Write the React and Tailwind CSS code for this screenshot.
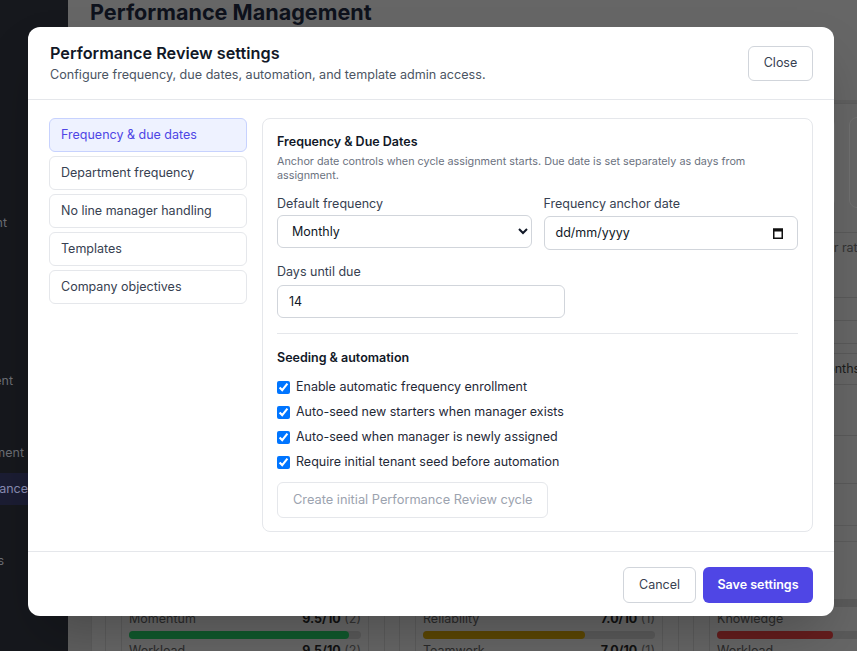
import React from "react";

function SideItem({ label, pr, mt, active }) {
  return (
    <div
      className={
        "h-[32px] flex items-center justify-end overflow-hidden whitespace-nowrap " +
        (active ? "bg-[#1b1d33] text-[#8a8db3] " : "text-[#6b6e75] ")
      }
      style={{ paddingRight: pr, marginTop: mt }}
    >
      <span className="shrink-0">{label}</span>
    </div>
  );
}

function Sidebar() {
  return (
    <aside className="w-[68px] shrink-0 bg-[#16181d] flex flex-col text-[12.5px]">
      <SideItem label="Recruitment" pr={61} mt={207} />
      <SideItem label="Development" pr={55} mt={126} />
      <SideItem label="Engagement" pr={44} mt={40} />
      <SideItem label="Performance" pr={40} mt={4} active />
      <SideItem label="Reports" pr={64} mt={40} />
    </aside>
  );
}

function Metric({ label, value, count, pct, color, first }) {
  return (
    <div className={first ? "" : "mt-[2px]"}>
      <div className="flex justify-between leading-[20px] text-[12.5px]">
        <span className="text-[#2a2a2a]">{label}</span>
        <span>
          <span className="font-bold text-[#111]">{value}</span>{" "}
          <span className="text-[#333]">({count})</span>
        </span>
      </div>
      <div className="mt-[2px] h-[8px] rounded-full bg-[#5a5a5a]">
        <div className={"h-[8px] rounded-full " + color} style={{ width: pct + "%" }} />
      </div>
    </div>
  );
}

function Column({ title, metrics }) {
  return (
    <div className="w-[280px] shrink-0 border border-[#5c5c5c] rounded-lg p-[15px]">
      <div className="border border-[#5c5c5c] rounded-md p-[7px]">
        <div className="text-[12.5px] leading-[20px] font-semibold text-[#111] mb-[8px]">{title}</div>
        {metrics.map((m, i) => (
          <Metric key={i} {...m} first={i === 0} />
        ))}
      </div>
    </div>
  );
}

function Main() {
  return (
    <main className="flex-1 bg-[#5f5f5f] flex flex-col overflow-hidden">
      <div className="bg-[#666666] pl-[22px] h-[100px] shrink-0">
        <h1 className="text-[21.6px] leading-[24px] font-bold text-[#0e121c] whitespace-nowrap">
          Performance Management
        </h1>
      </div>
      <section className="ml-[23px] mt-[3px] w-[900px] shrink-0 bg-[#666666] border border-[#5c5c5c] rounded-lg pt-[13px] px-[13px] pb-[40px]">
        <div className="flex gap-[14px]">
          {[0, 1, 2, 3].map((i) => (
            <div key={i} className="w-[234px] h-[91px] shrink-0 rounded-lg border border-[#707070]" />
          ))}
        </div>
        <div className="mt-[24px] border-t border-[#5a5a5a] text-[12.5px]">
          <div className="h-[65px] border-b border-[#5a5a5a] grid grid-cols-[681px_1fr] pt-[5px]">
            <div />
            <div className="leading-[20px] text-[#333] whitespace-nowrap">Manager rating</div>
          </div>
          <div className="h-[23px] border-b border-[#5a5a5a]" />
          <div className="h-[23px] border-b border-[#5a5a5a]" />
          <div className="h-[92px] border-b border-[#5a5a5a] grid grid-cols-[687px_1fr]">
            <div />
            <div className="mt-[9px] h-[32px] border border-[#5a5a5a] rounded-md flex items-center pl-[12px] text-[#1a1a1a] whitespace-nowrap">
              6 months
            </div>
          </div>
          <div className="h-[48px] border-b border-[#5a5a5a]" />
        </div>
        <div className="mt-[41px] flex gap-[14px]">
          <Column
            title="Engineering"
            metrics={[
              { label: "Quality", value: "8.0/10", count: 2, pct: 80, color: "bg-[#105a2d]" },
              { label: "Momentum", value: "9.5/10", count: 2, pct: 95, color: "bg-[#105a2d]" },
              { label: "Workload", value: "9.5/10", count: 2, pct: 95, color: "bg-[#105a2d]" },
            ]}
          />
          <Column
            title="Operations"
            metrics={[
              { label: "Quality", value: "7.0/10", count: 1, pct: 70, color: "bg-[#5c4703]" },
              { label: "Reliability", value: "7.0/10", count: 1, pct: 70, color: "bg-[#5c4703]" },
              { label: "Teamwork", value: "7.0/10", count: 1, pct: 70, color: "bg-[#5c4703]" },
            ]}
          />
          <Column
            title="Sales"
            metrics={[
              { label: "Quality", value: "5.0/10", count: 1, pct: 50, color: "bg-[#651d1d]" },
              { label: "Knowledge", value: "5.0/10", count: 1, pct: 50, color: "bg-[#651d1d]" },
              { label: "Workload", value: "5.0/10", count: 1, pct: 50, color: "bg-[#651d1d]" },
            ]}
          />
        </div>
      </section>
    </main>
  );
}

const navItems = [
  "Frequency & due dates",
  "Department frequency",
  "No line manager handling",
  "Templates",
  "Company objectives",
];

const checks = [
  "Enable automatic frequency enrollment",
  "Auto-seed new starters when manager exists",
  "Auto-seed when manager is newly assigned",
  "Require initial tenant seed before automation",
];

function CalendarIcon() {
  return (
    <svg width="12" height="13" viewBox="0 0 12 13" className="shrink-0">
      <rect x="1.75" y="2.25" width="8.5" height="9" fill="none" stroke="#111" strokeWidth="1.5" />
      <rect x="1" y="1.5" width="10" height="3" fill="#111" />
    </svg>
  );
}

function Modal() {
  return (
    <div className="absolute left-[28px] top-[27px] w-[806px] bg-white rounded-xl shadow-2xl text-[12.5px]">
      <div className="flex items-center justify-between px-[21px] pt-[14px] pb-[14px] border-b border-[#e5e7eb]">
        <div className="pl-[1px]">
          <div className="text-[16.25px] leading-[24px] font-semibold text-[#111827]">
            Performance Review settings
          </div>
          <div className="text-[12.6px] leading-[20px] text-[#4b5563]">
            Configure frequency, due dates, automation, and template admin access.
          </div>
        </div>
        <button className="h-[35px] w-[65px] rounded-md border border-[#d1d5db] text-[12.5px] text-[#374151] bg-white">
          Close
        </button>
      </div>

      <div className="flex gap-[15px] px-[21px] pt-[18px] pb-[19px] border-b border-[#e5e7eb]">
        <nav className="w-[198px] shrink-0 flex flex-col gap-[4px]">
          {navItems.map((n, i) => (
            <div
              key={n}
              className={
                "h-[34px] rounded-md border flex items-center pl-[11px] pt-[1px] text-[12.5px] " +
                (i === 0
                  ? "bg-[#eef2ff] border-[#c7d2fe] text-[#4f46e5]"
                  : "bg-white border-[#e5e7eb] text-[#374151]")
              }
            >
              {n}
            </div>
          ))}
        </nav>

        <div className="flex-1 rounded-lg border border-[#e5e7eb] px-[14px] pt-[13px] pb-[13px]">
          <div className="text-[12.5px] leading-[20px] font-semibold text-[#111827]">Frequency &amp; Due Dates</div>
          <div className="mt-[3px] text-[10.8px] leading-[14px] text-[#6b7280]">
            Anchor date controls when cycle assignment starts. Due date is set separately as days from assignment.
          </div>

          <div className="mt-[11px] grid grid-cols-2 gap-x-[12px]">
            <div>
              <div className="leading-[20px] text-[#374151] mb-[1px]">Default frequency</div>
              <select
                defaultValue="Monthly"
                className="w-full h-[33px] rounded-md border border-[#d1d5db] bg-white px-[10px] text-[12.5px] text-[#111827]"
              >
                <option>Monthly</option>
                <option>Quarterly</option>
                <option>Annually</option>
              </select>
            </div>
            <div>
              <div className="leading-[20px] text-[#374151] mb-[2px]">Frequency anchor date</div>
              <div className="w-full h-[34px] rounded-md border border-[#d1d5db] bg-white pl-[11px] pr-[13px] flex items-center justify-between text-[12.5px] text-[#111827]">
                <span>dd/mm/yyyy</span>
                <CalendarIcon />
              </div>
            </div>
          </div>

          <div className="mt-[12px] leading-[20px] text-[#374151]">Days until due</div>
          <input
            defaultValue="14"
            className="mt-[3px] w-[288px] h-[33px] rounded-md border border-[#d1d5db] px-[11px] text-[12.5px] text-[#111827] outline-none"
          />

          <div className="mt-[15px] border-t border-[#e5e7eb]" />

          <div className="mt-[14px] leading-[20px] font-semibold text-[#111827]">Seeding &amp; automation</div>
          <div className="mt-[9px] flex flex-col gap-[5px]">
            {checks.map((c) => (
              <label key={c} className="h-[20px] flex items-center gap-[6px] text-[#1f2937]">
                <input type="checkbox" defaultChecked className="m-0 w-[13px] h-[13px]" />
                <span>{c}</span>
              </label>
            ))}
          </div>
          <button
            disabled
            className="mt-[10px] h-[36px] px-[15px] rounded-md border border-[#e5e7eb] text-[12.8px] text-[#9ca3af] bg-white"
          >
            Create initial Performance Review cycle
          </button>
        </div>
      </div>

      <div className="flex justify-end gap-[7px] px-[21px] pt-[15px] pb-[13px]">
        <button className="h-[36px] w-[73px] rounded-md border border-[#d1d5db] bg-white text-[12.5px] text-[#374151]">
          Cancel
        </button>
        <button className="h-[36px] w-[110px] rounded-md bg-[#4f46e5] text-white text-[12.5px] font-semibold">
          Save settings
        </button>
      </div>
    </div>
  );
}

export default function App() {
  return (
    <div className="relative w-[857px] h-[651px] overflow-hidden flex font-['Inter',sans-serif]">
      <Sidebar />
      <Main />
      <Modal />
    </div>
  );
}
